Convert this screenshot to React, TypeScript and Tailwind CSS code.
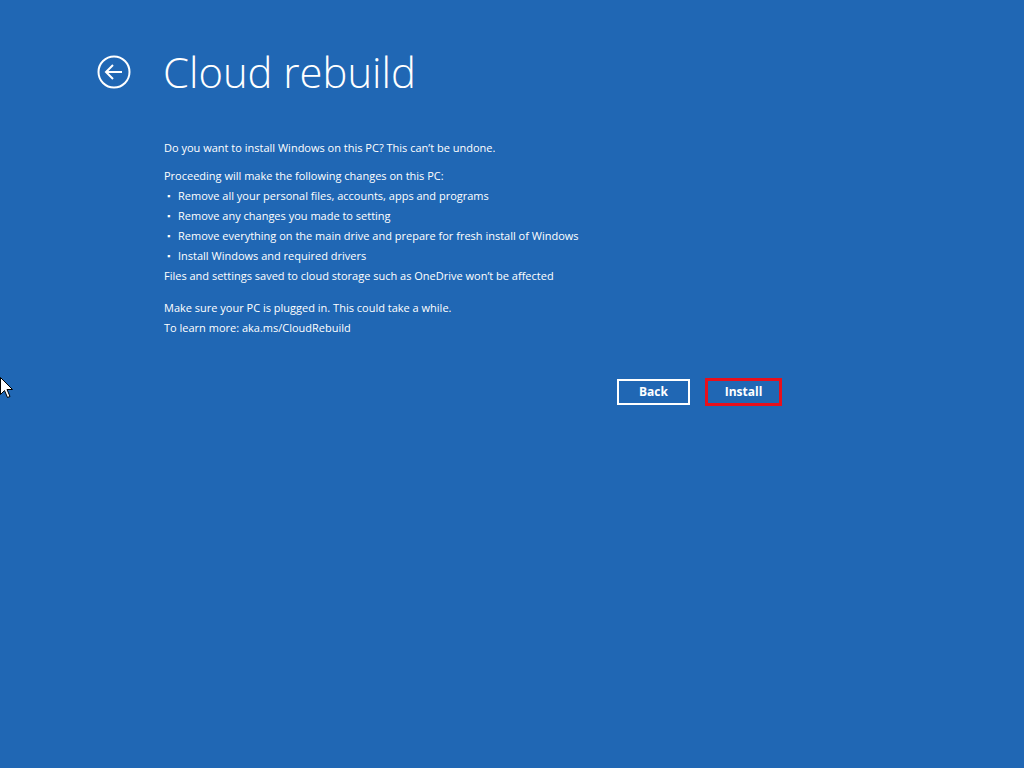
const BULLETS = [
  "Remove all your personal files, accounts, apps and programs",
  "Remove any changes you made to setting",
  "Remove everything on the main drive and prepare for fresh install of Windows",
  "Install Windows and required drivers",
];

export default function App() {
  return (
    <div
      className="relative w-[1024px] h-[768px] overflow-hidden bg-[#2067b4] text-white"
      style={{ fontFamily: '"Open Sans", "Noto Sans", sans-serif' }}
    >
      <header className="flex items-center pt-[46px] pl-[97px]">
        <svg width="34" height="34" viewBox="0 0 34 34" className="shrink-0">
          <circle cx="17" cy="17" r="15.5" fill="none" stroke="white" strokeWidth="2" />
          <path d="M9 17h16M16 10l-7 7 7 7" fill="none" stroke="white" strokeWidth="2" />
        </svg>
        <h1 className="ml-[32px] text-[41.8px] leading-[52px] font-light">
          Cloud rebuild
        </h1>
      </header>

      <main className="pl-[164px] pt-[40px] text-[11px] leading-[20px]">
        <p>Do you want to install Windows on this PC? This can’t be undone.</p>
        <p className="mt-[8px]">Proceeding will make the following changes on this PC:</p>
        <ul>
          {BULLETS.map((b) => (
            <li key={b} className="flex items-center">
              <span className="w-[14px] pl-[3px] text-[9px]">▪</span>
              {b}
            </li>
          ))}
        </ul>
        <p>Files and settings saved to cloud storage such as OneDrive won’t be affected</p>
        <p className="mt-[12px]">Make sure your PC is plugged in. This could take a while.</p>
        <p>To learn more: aka.ms/CloudRebuild</p>

        <div className="flex gap-[15px] mt-[41px] ml-[453px]">
          <button className="w-[73px] h-[26px] border-2 border-white text-[12px] font-bold">
            Back
          </button>
          <button className="w-[77px] h-[28px] -mt-px border-[3px] border-[#e8101c] text-[12px] font-bold">
            Install
          </button>
        </div>
      </main>

      <svg
        width="14"
        height="22"
        viewBox="0 0 14 22"
        className="absolute left-0 top-[377px]"
      >
        <path
          d="M0.5 0.5v17l4-4 3 7 2.5-1-3-7h5.5z"
          fill="white"
          stroke="black"
          strokeWidth="1"
        />
      </svg>
    </div>
  );
}
